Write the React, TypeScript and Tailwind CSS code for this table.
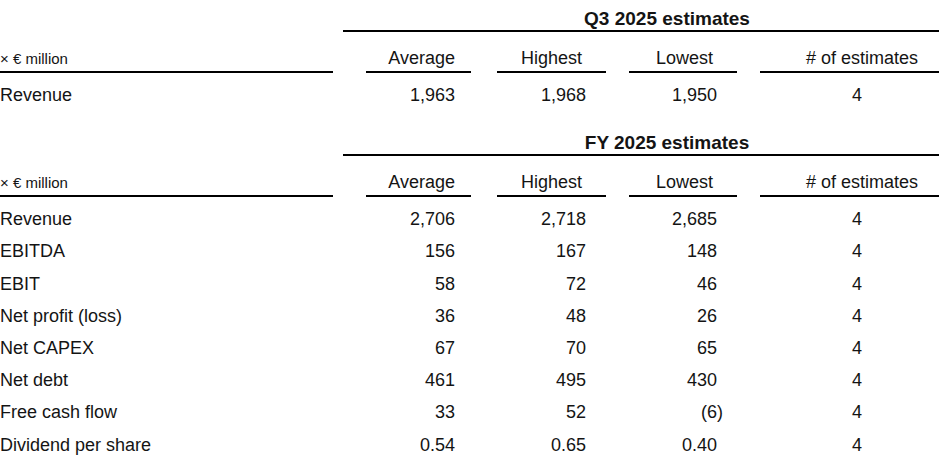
const cols = [
  { key: 'avg', head: 'Average', cell: 'ml-[33px] w-[105px]', headPad: 'pr-[16px]', valPad: 'pr-[16px]' },
  { key: 'high', head: 'Highest', cell: 'ml-[26px] w-[109px]', headPad: 'pr-[24px]', valPad: 'pr-[20px]' },
  { key: 'low', head: 'Lowest', cell: 'ml-[23px] w-[108px]', headPad: 'pr-[24px]', valPad: 'pr-[20px]' },
  { key: 'num', head: '# of estimates', cell: 'ml-[23px] w-[179px]', headPad: 'pr-[21px]', valPad: 'pr-[77px]' },
];

type Row = { label: string; values: string[] };

const q3Rows: Row[] = [{ label: 'Revenue', values: ['1,963', '1,968', '1,950', '4'] }];

const fyRows: Row[] = [
  { label: 'Revenue', values: ['2,706', '2,718', '2,685', '4'] },
  { label: 'EBITDA', values: ['156', '167', '148', '4'] },
  { label: 'EBIT', values: ['58', '72', '46', '4'] },
  { label: 'Net profit (loss)', values: ['36', '48', '26', '4'] },
  { label: 'Net CAPEX', values: ['67', '70', '65', '4'] },
  { label: 'Net debt', values: ['461', '495', '430', '4'] },
  { label: 'Free cash flow', values: ['33', '52', '(6)', '4'] },
  { label: 'Dividend per share', values: ['0.54', '0.65', '0.40', '4'] },
];

function Value({ v }: { v: string }) {
  // negative figures in brackets: let the closing bracket hang past the digits
  if (v.startsWith('(')) return <span className="-mr-[6px]">{v}</span>;
  return <span>{v}</span>;
}

function Section({ title, rows, top }: { title: string; rows: Row[]; top: string }) {
  return (
    <div>
      {/* Title over the estimate columns */}
      <div className="flex">
        <div className="w-[343px] shrink-0" />
        <div className={`flex-1 border-b-2 border-black ${top} pl-[52px] text-center text-[19px] font-bold leading-[22px]`}>
          {title}
        </div>
      </div>

      {/* Column headers */}
      <div className="flex pt-[15px]">
        <div className="w-[333px] shrink-0 border-b-2 border-black pb-px pt-px text-[15px] leading-[22px]">
          × € million
        </div>
        {cols.map((c) => (
          <div key={c.key} className={`${c.cell} shrink-0 border-b-2 border-black pb-px text-right leading-[22px] ${c.headPad}`}>
            {c.head}
          </div>
        ))}
      </div>

      {/* Data rows */}
      <div className="pt-[6px]">
        {rows.map((r) => (
          <div key={r.label} className="flex h-[32.2px] items-center leading-[32px]">
            <div className="w-[333px] shrink-0">{r.label}</div>
            {cols.map((c, i) => (
              <div key={c.key} className={`${c.cell} shrink-0 text-right ${c.valPad}`}>
                <Value v={r.values[i]} />
              </div>
            ))}
          </div>
        ))}
      </div>
    </div>
  );
}

export default function App() {
  return (
    <div className="h-[464px] w-[939px] overflow-hidden bg-white text-[18px] text-[#141414] font-['Liberation_Sans',Arial,sans-serif]">
      <Section title="Q3 2025 estimates" rows={q3Rows} top="pt-[8px]" />
      <Section title="FY 2025 estimates" rows={fyRows} top="pt-[21px]" />
    </div>
  );
}
